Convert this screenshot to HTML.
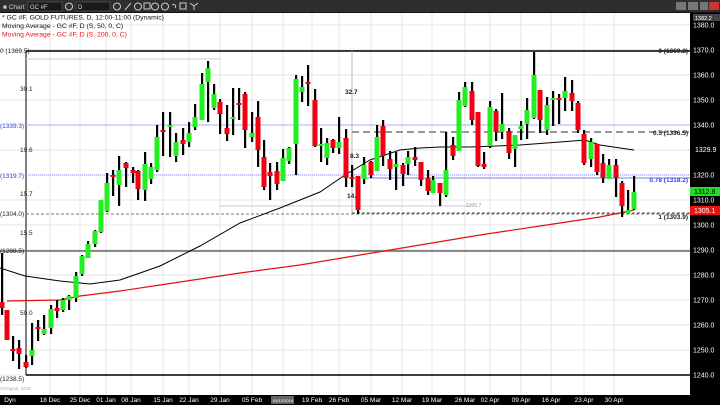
<!DOCTYPE html><html><head><style>
body{margin:0;width:720px;height:405px;overflow:hidden;background:#fff;font-family:"Liberation Sans",sans-serif}
svg{position:absolute;left:0;top:0}
</style></head><body>
<svg width="720" height="405" xmlns="http://www.w3.org/2000/svg" font-family="Liberation Sans, sans-serif">
<rect x="0" y="0" width="720" height="405" fill="#fff"/>
<g id="grid" stroke="#e4e4e4" stroke-width="1"></g>
<line x1="26" y1="51" x2="690" y2="51" stroke="#000" stroke-width="1.5"/>
<line x1="26" y1="375" x2="690" y2="375" stroke="#000" stroke-width="1.5"/>
<line x1="26" y1="51" x2="26" y2="375" stroke="#000" stroke-width="1"/>
<line x1="26" y1="125" x2="690" y2="125" stroke="#aab0f0" stroke-width="1"/>
<line x1="26" y1="175" x2="690" y2="175" stroke="#8890f0" stroke-width="1" stroke-dasharray="1,1"/>
<line x1="26" y1="214" x2="690" y2="214" stroke="#777" stroke-width="1" stroke-dasharray="3,2"/>
<line x1="0" y1="251" x2="690" y2="251" stroke="#666" stroke-width="1.5"/>
<line x1="26" y1="59" x2="220" y2="59" stroke="#ccc" stroke-width="1"/>
<line x1="220" y1="206" x2="470" y2="206" stroke="#ccc" stroke-width="1"/>
<line x1="352" y1="51" x2="352" y2="213" stroke="#bbb" stroke-width="1"/>
<line x1="352" y1="132" x2="690" y2="132" stroke="#777" stroke-width="1.5" stroke-dasharray="7,4"/>
<line x1="365" y1="178" x2="690" y2="178" stroke="#7080ee" stroke-width="1"/>
<line x1="352" y1="213" x2="690" y2="213" stroke="#555" stroke-width="1" stroke-dasharray="3,2"/>
<g font-size="6.8">
<text x="2" y="19.5" fill="#111">* GC #F, GOLD FUTURES, D, 12:00-11:00 (Dynamic)</text>
<text x="2" y="28" fill="#111">Moving Average - GC #F, D (S, 50, 0, C)</text>
<text x="2" y="36.5" fill="#ee1111">Moving Average - GC #F, D (S, 200, 0, C)</text>
</g>
<g font-size="6.5" fill="#222">
<text x="0" y="53">0 (1369.5)</text>
<text x="0" y="128" fill="#3344dd">(1339.3)</text>
<text x="0" y="178" fill="#3344dd">(1319.7)</text>
<text x="0" y="216">(1304.0)</text>
<text x="0" y="253">(1288.5)</text>
<text x="0" y="381">(1238.5)</text>
<text x="20" y="91">30.1</text><text x="20" y="152">19.6</text><text x="20" y="196">15.7</text><text x="20" y="235">15.5</text><text x="20" y="315">50.0</text>
<text x="345" y="94" font-weight="bold">32.7</text><text x="350" y="158" font-weight="bold">8.3</text><text x="347" y="198" font-weight="bold">14.</text>
<text x="466" y="207" fill="#999" font-size="5">1306.7</text>
<text x="0" y="390" fill="#aaa" font-size="4.5">©eSignal, 2018</text>
<text x="688" y="53" text-anchor="end" font-weight="bold">0 (1369.2)</text>
<text x="688" y="135" text-anchor="end" font-weight="bold">0.5 (1336.5)</text>
<text x="688" y="182" text-anchor="end" font-weight="bold" fill="#3344ee">0.78 (1318.2)</text>
<text x="688" y="219" text-anchor="end" font-weight="bold">1 (1303.9)</text>
</g>
<polyline fill="none" stroke="#000" stroke-width="1" points="0,268 25,276 60,281 90,284 120,280 160,266 200,246 240,223 280,208 320,192 345,175 370,160 400,150 420,148 440,147 470,147 520,145 560,142 585,140 600,145 620,148 634,150"/>
<polyline fill="none" stroke="#e31010" stroke-width="1.2" points="7,301 60,300 80,296 120,291 160,285 240,273 300,265 360,255 420,245 480,235 540,226 600,217 634,210"/>
<g id="c"></g>
<rect x="690" y="13" width="30" height="392" fill="#000"/>
<g font-size="7" fill="#fff" id="ax"></g>
<rect x="693" y="14" width="27" height="7" fill="#444"/><text x="695" y="20" font-size="5.5" fill="#fff">1382.2</text>
<rect x="690" y="187" width="30" height="9" fill="#22dd22"/><text x="694" y="194" font-size="7" fill="#000">1312.8</text>
<rect x="690" y="206" width="30" height="9" fill="#ee1111"/><text x="694" y="213" font-size="7" fill="#fff">1305.1</text>
<rect x="0" y="0" width="720" height="13" fill="#2e2e2e"/>
<rect x="0" y="12" width="720" height="1" fill="#111"/>
<text x="3" y="9" font-size="6.5" fill="#ccc">■ Chart</text>
<rect x="28" y="2" width="34" height="9" fill="#1a1a1a" stroke="#666" stroke-width=".5"/><text x="30" y="9" font-size="6" fill="#ddd">GC #F</text>
<circle cx="69" cy="6.5" r="3.5" fill="none" stroke="#ccc"/>
<rect x="76" y="2" width="34" height="9" fill="#1a1a1a" stroke="#666" stroke-width=".5"/><text x="78" y="9" font-size="6" fill="#ddd">D</text>
<g fill="none" stroke="#ccc" stroke-width="1"><circle cx="117" cy="6.5" r="3.5"/><circle cx="138" cy="6.5" r="3.5"/><circle cx="155" cy="6.5" r="3.5"/><circle cx="165" cy="6.5" r="3.5"/><rect x="144" y="3" width="6" height="6"/><rect x="180" y="3" width="6" height="6"/><path d="M125 10 L131 3"/><path d="M172 5 a2 2 0 1 1 3 3"/><path d="M190 3 L194 6 L198 3 M194 6 V10"/></g>
<rect x="676" y="2" width="10" height="8" fill="#777"/><rect x="688" y="2" width="10" height="8" fill="#777"/><rect x="700" y="2" width="8" height="8" fill="#777"/><rect x="709" y="2" width="10" height="8" fill="#c33"/>
<rect x="0" y="395" width="720" height="10" fill="#000"/>
<rect x="271" y="396" width="23" height="8" fill="#666"/>
<g font-size="6.5" fill="#fff" text-anchor="middle" id="dt"><text x="10" y="402">Dyn</text></g>
</svg>
<script>
var ns="http://www.w3.org/2000/svg";
function el(p,t,a,tx){var e=document.createElementNS(ns,t);for(var k in a)e.setAttribute(k,a[k]);if(tx)e.textContent=tx;p.appendChild(e);}
var g=document.getElementById('grid');
[50,80,106,131,163,189,220,252,283,312,339,371,402,432,465,490,521,551,584,614].forEach(function(x){el(g,'line',{x1:x,y1:13,x2:x,y2:395});});
for(var y=25;y<=375;y+=25)el(g,'line',{x1:0,y1:y,x2:690,y2:y});
var ax=document.getElementById('ax');
for(var i=0;i<=14;i++){var p=1380-i*10;if(p==1330)continue;el(ax,'text',{x:693,y:25+i*25+2.5},p.toFixed(1));}
el(ax,'text',{x:695,y:152},'1329.9');
var dt=document.getElementById('dt');
[[50,'18 Dec'],[80,'25 Dec'],[106,'01 Jan'],[131,'08 Jan'],[163,'15 Jan'],[189,'22 Jan'],[220,'29 Jan'],[252,'05 Feb'],[312,'19 Feb'],[339,'26 Feb'],[371,'05 Mar'],[402,'12 Mar'],[432,'19 Mar'],[465,'26 Mar'],[490,'02 Apr'],[521,'09 Apr'],[551,'16 Apr'],[584,'23 Apr'],[614,'30 Apr']].forEach(function(d){el(dt,'text',{x:d[0],y:402},d[1]);});
el(dt,'text',{x:283,y:402,'font-size':4},'02/12/2018');
var R='#f00010',G='#22ee22';
var C=[[2,253,315,302,308,R],[7,310,338,310,340,R],[13,336,361,349,351,R],[19,340,369,348,354,R],[26,355,368,362,367,R],[32,323,365,350,356,G],[38,320,341,327,329,R],[44,315,335,329,334,G],[51,305,334,309,328,G],[57,300,318,308,311,R],[63,298,312,300,310,G],[69,295,310,296,300,G],[76,272,302,276,298,G],[82,255,276,256,274,G],[88,241,258,244,258,G],[95,230,247,231,244,G],[101,200,233,200,232,G],[107,173,212,183,211,G],[113,170,196,175,177,R],[119,156,206,170,185,G],[126,162,187,163,168,R],[133,167,183,170,173,R],[138,170,200,171,189,R],[145,152,201,164,190,G],[151,163,184,167,179,G],[157,125,172,137,170,G],[163,112,156,130,132,R],[170,112,157,125,127,G],[176,133,162,142,156,G],[183,128,155,140,144,R],[189,122,147,133,142,G],[195,104,130,117,127,G],[202,73,120,84,120,G],[208,61,122,68,82,G],[214,84,110,94,108,G],[220,99,134,102,114,R],[227,105,141,128,134,R],[233,88,135,117,119,G],[239,88,120,103,105,R],[245,92,148,94,130,R],[252,112,142,133,137,G],[258,101,167,117,150,R],[264,140,190,157,187,R],[270,163,200,172,176,R],[277,162,190,171,184,R],[283,149,181,158,181,G],[289,147,164,148,161,G],[296,75,175,79,144,G],[302,76,102,87,92,G],[308,65,106,82,84,R],[315,89,147,100,146,R],[321,128,162,144,146,G],[327,138,165,143,158,G],[333,139,153,140,148,R],[339,117,154,142,148,G],[346,129,187,138,178,R],[352,165,187,177,179,R],[358,176,214,176,210,R],[364,157,184,165,179,G],[371,161,178,162,175,R],[377,125,170,137,171,G],[383,120,166,126,156,R],[390,151,180,159,169,R],[396,152,190,164,167,G],[403,163,186,165,174,R],[408,151,175,157,164,G],[415,147,166,157,160,R],[421,162,186,162,180,R],[428,170,195,178,191,R],[433,176,191,180,193,G],[440,183,206,183,193,R],[446,132,197,170,195,G],[453,137,160,145,156,R],[459,92,151,100,151,G],[465,82,107,87,106,G],[472,82,125,91,120,R],[478,112,167,112,166,R],[484,152,169,164,167,R],[490,101,148,107,146,G],[496,109,141,111,132,R],[502,93,139,124,132,G],[509,128,159,131,153,R],[515,135,167,135,149,G],[521,121,140,126,129,G],[527,98,139,110,124,G],[534,52,119,75,118,G],[540,90,133,90,120,R],[547,97,135,105,130,G],[553,91,126,98,100,G],[559,94,124,98,100,R],[565,77,111,91,98,G],[572,80,111,93,101,R],[578,101,133,103,130,R],[584,130,165,134,163,R],[591,138,167,142,159,G],[597,144,175,144,172,R],[603,154,183,163,178,R],[609,159,179,165,179,G],[616,159,197,165,178,R],[622,181,217,183,206,R],[628,190,212,210,213,G],[634,176,210,192,209,G]];
var c=document.getElementById('c');
C.forEach(function(d){el(c,'rect',{x:d[0]-1,y:d[1],width:2.2,height:d[2]-d[1],fill:'#000'});el(c,'rect',{x:d[0]-2.5,y:d[3],width:5,height:Math.max(1.5,d[4]-d[3]),fill:d[5]});});
</script>
</body></html>
